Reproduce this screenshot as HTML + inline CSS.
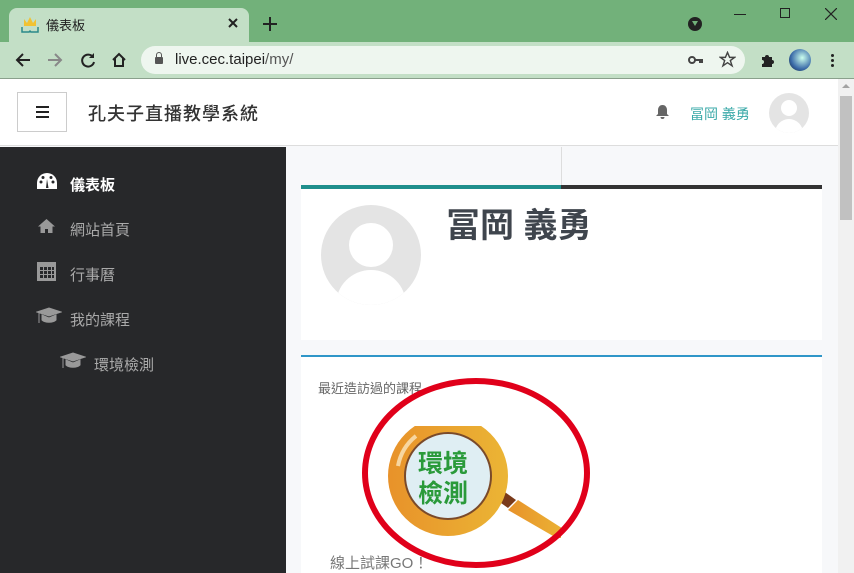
<!DOCTYPE html>
<html><head><meta charset="utf-8"><style>
*{margin:0;padding:0;box-sizing:border-box}
body{width:854px;height:573px;overflow:hidden;position:relative;font-family:"Liberation Sans","Noto Sans CJK TC",sans-serif;background:#f7f8fa}
.a{position:absolute}
</style></head><body>
<div class="a" style="left:0;top:0;width:854px;height:42px;background:#72b17a"></div>
<div class="a" style="left:9px;top:8px;width:240px;height:36px;background:#c3dfc6;border-radius:8px 8px 0 0"></div>
<div class="a" style="left:0;top:42px;width:854px;height:36px;background:#c3dfc6"></div>
<div class="a" style="left:0;top:78px;width:854px;height:1px;background:#8aa08c"></div>
<svg class="a" style="left:20px;top:15px" width="20" height="20" viewBox="0 0 20 20"><path d="M4 4l3 4 3-6 3 6 3-4v7H4z" fill="#f1c232"/><path d="M2 12v5h7l1-1 1 1h7v-5" stroke="#2a8a8a" stroke-width="1.5" fill="none"/></svg>
<div class="a" style="left:46px;top:15px;font-size:13px;color:#222">儀表板</div>
<svg class="a" style="left:228px;top:18px" width="10" height="10"><path d="M1 1l8 8M9 1l-8 8" stroke="#222" stroke-width="2"/></svg>
<svg class="a" style="left:263px;top:17px" width="14" height="14"><path d="M7 0v14M0 7h14" stroke="#222" stroke-width="2"/></svg>
<div class="a" style="left:688px;top:17px;width:14px;height:14px;border-radius:50%;background:#222"></div>
<div class="a" style="left:692px;top:21px;width:0;height:0;border-left:3px solid transparent;border-right:3px solid transparent;border-top:5px solid #72b17a"></div>
<div class="a" style="left:734px;top:14px;width:12px;height:1px;background:#222"></div>
<div class="a" style="left:780px;top:8px;width:10px;height:10px;border:1px solid #222"></div>
<svg class="a" style="left:825px;top:8px" width="12" height="12"><path d="M0 0l12 12M12 0L0 12" stroke="#222" stroke-width="1.2"/></svg>
<svg class="a" style="left:14px;top:51px" width="18" height="18"><path d="M16 9H3M9 3L3 9l6 6" stroke="#222" stroke-width="2" fill="none"/></svg>
<svg class="a" style="left:46px;top:51px" width="18" height="18"><path d="M2 9h13M9 3l6 6-6 6" stroke="#888" stroke-width="2" fill="none"/></svg>
<svg class="a" style="left:79px;top:51px" width="18" height="18"><path d="M14 6A6 6 0 1 0 15 11" stroke="#222" stroke-width="2" fill="none"/><path d="M15 2v5h-5z" fill="#222"/></svg>
<svg class="a" style="left:110px;top:51px" width="18" height="18" viewBox="0 0 18 18"><path d="M3 9L9 3l6 6M5 7v8h8V7" stroke="#222" stroke-width="2" fill="none"/></svg>
<div class="a" style="left:141px;top:46px;width:604px;height:28px;background:#eef6ef;border-radius:14px"></div>
<div class="a" style="left:155px;top:57px;width:8px;height:7px;background:#555;border-radius:1px"></div>
<div class="a" style="left:156px;top:52px;width:6px;height:7px;border:1.5px solid #555;border-radius:3px 3px 0 0"></div>
<div class="a" style="left:175px;top:51px;font-size:15px;color:#222">live.cec.taipei<span style="color:#555">/my/</span></div>
<svg class="a" style="left:688px;top:55px" width="16" height="10"><circle cx="4" cy="5" r="3" stroke="#444" stroke-width="2" fill="none"/><path d="M7 5h8M12 5v3M14 5v3" stroke="#444" stroke-width="2"/></svg>
<svg class="a" style="left:719px;top:51px" width="17" height="17" viewBox="0 0 24 24"><path d="M12 2l3 7h7l-6 4.5 2.5 7.5-6.5-4.5-6.5 4.5 2.5-7.5L2 9h7z" stroke="#444" stroke-width="2" fill="none"/></svg>
<svg class="a" style="left:760px;top:52px" width="16" height="16" viewBox="0 0 16 16"><path d="M2 5h3a2 2 0 014 0h3v3a2 2 0 010 4v3H2v-3a2 2 0 000-4z" fill="#222"/></svg>
<div class="a" style="left:789px;top:49px;width:22px;height:22px;border-radius:50%;background:radial-gradient(circle at 60% 40%,#cfe,#3a6aa8 60%,#123)"></div>
<div class="a" style="left:831px;top:54px;width:3px;height:3px;background:#222;border-radius:50%;box-shadow:0 5px #222,0 10px #222"></div>
<div class="a" style="left:0;top:79px;width:838px;height:67px;background:#fff;border-bottom:1px solid #ddd"></div>
<div class="a" style="left:17px;top:92px;width:50px;height:40px;border:1px solid #ccc;background:#fff"></div>
<div class="a" style="left:36px;top:106px;width:13px;height:2px;background:#222;box-shadow:0 5px #222,0 10px #222"></div>
<div class="a" style="left:88px;top:100px;font-size:18px;color:#333;letter-spacing:1px;font-weight:500">孔夫子直播教學系統</div>
<svg class="a" style="left:655px;top:104px" width="15" height="16" viewBox="0 0 15 16"><path d="M7.5 1c-3 0-4.5 2.5-4.5 5v4L1 12h13l-2-2V6c0-2.5-1.5-5-4.5-5zM5.5 13a2 2 0 004 0z" fill="#666"/></svg>
<div class="a" style="left:690px;top:104px;font-size:14px;color:#3aa9a8">冨岡 義勇</div>
<div class="a" style="left:769px;top:93px;width:40px;height:40px;border-radius:50%;background:#e4e4e4;overflow:hidden"><div class="a" style="left:12px;top:7px;width:16px;height:16px;border-radius:50%;background:#fff"></div><div class="a" style="left:6px;top:26px;width:28px;height:28px;border-radius:50%;background:#fff"></div></div>
<div class="a" style="left:838px;top:79px;width:16px;height:494px;background:#f1f1f1"></div>
<div class="a" style="left:840px;top:96px;width:12px;height:124px;background:#c1c1c1"></div>
<div class="a" style="left:842px;top:84px;width:0;height:0;border-left:4px solid transparent;border-right:4px solid transparent;border-bottom:4px solid #a3a3a3"></div>
<div class="a" style="left:0;top:147px;width:286px;height:426px;background:#27282a"></div>
<svg class="a" style="left:36px;top:172px" width="22" height="18" viewBox="0 0 22 18"><path d="M11 1A10 10 0 001 11v6h20v-6A10 10 0 0011 1z" fill="#fff"/><circle cx="5" cy="10" r="1.5" fill="#27282a"/><circle cx="7" cy="5.5" r="1.5" fill="#27282a"/><circle cx="15" cy="5.5" r="1.5" fill="#27282a"/><circle cx="17" cy="10" r="1.5" fill="#27282a"/><path d="M10 16l1-9 1.5 9z" fill="#27282a"/></svg>
<div class="a" style="left:70px;top:174px;font-size:15px;color:#fff;font-weight:bold">儀表板</div>
<svg class="a" style="left:37px;top:218px" width="19" height="16" viewBox="0 0 19 16"><path d="M9.5 1L1 8.5h2.5V15h4.5v-4h3v4h4.5V8.5H18z" fill="#999"/></svg>
<div class="a" style="left:70px;top:219px;font-size:15px;color:#aaa">網站首頁</div>
<div class="a" style="left:37px;top:262px;width:19px;height:19px;border:2px solid #999;border-top-width:5px;background:repeating-linear-gradient(90deg,#999 0 1px,transparent 1px 4px),repeating-linear-gradient(0deg,#999 0 1px,transparent 1px 4px)"></div>
<div class="a" style="left:70px;top:264px;font-size:15px;color:#aaa">行事曆</div>
<svg class="a" style="left:36px;top:306px" width="26" height="20" viewBox="0 0 26 20"><path d="M1 6l12-4 12 4-12 4z M6 9v5c3 3 11 3 14 0V9l-7 3z M3 7v10" fill="#999" stroke="#999" stroke-width="1"/></svg>
<div class="a" style="left:70px;top:309px;font-size:15px;color:#aaa">我的課程</div>
<svg class="a" style="left:60px;top:351px" width="26" height="20" viewBox="0 0 26 20"><path d="M1 6l12-4 12 4-12 4z M6 9v5c3 3 11 3 14 0V9l-7 3z M3 7v10" fill="#999" stroke="#999" stroke-width="1"/></svg>
<div class="a" style="left:94px;top:354px;font-size:15px;color:#aaa">環境檢測</div>
<div class="a" style="left:561px;top:147px;width:1px;height:38px;background:#ddd"></div>
<div class="a" style="left:301px;top:185px;width:521px;height:155px;background:#fff"></div>
<div class="a" style="left:301px;top:185px;width:260px;height:4px;background:#1f8f8c"></div>
<div class="a" style="left:561px;top:185px;width:261px;height:4px;background:#333"></div>
<div class="a" style="left:321px;top:205px;width:100px;height:100px;border-radius:50%;background:#e4e4e4;overflow:hidden"><div class="a" style="left:28px;top:18px;width:44px;height:44px;border-radius:50%;background:#fff"></div><div class="a" style="left:15px;top:65px;width:70px;height:70px;border-radius:50%;background:#fff"></div></div>
<div class="a" style="left:446px;top:198px;font-size:34px;color:#3f454d;font-weight:bold">冨岡 義勇</div>
<div class="a" style="left:301px;top:355px;width:521px;height:218px;background:#fff"></div>
<div class="a" style="left:301px;top:355px;width:521px;height:2px;background:#2f96c8"></div>
<div class="a" style="left:318px;top:378px;font-size:13px;color:#666">最近造訪過的課程</div>
<svg class="a" style="left:386px;top:426px" width="175" height="112" viewBox="0 0 175 112">
<defs><linearGradient id="g" x1="0" x2="1"><stop offset="0" stop-color="#e8922a"/><stop offset="1" stop-color="#ebb535"/></linearGradient></defs>
<path d="M122 84l10-10 50 32-8 8z" fill="url(#g)"/><path d="M108 72l8-8 14 10-8 8z" fill="#7a3a1a"/>
<circle cx="62" cy="50" r="60" fill="url(#g)"/>
<circle cx="62" cy="50" r="43" fill="#dfeef3" stroke="#7a4a2a" stroke-width="2"/>
<path d="M12 40a50 50 0 0 1 18-30" stroke="#f7d6a0" stroke-width="4" fill="none"/>
<text x="32" y="46" font-size="25" fill="#2a9a3a" font-family="Noto Sans CJK TC,sans-serif" font-weight="bold">環境</text>
<text x="32" y="76" font-size="25" fill="#2a9a3a" font-family="Noto Sans CJK TC,sans-serif" font-weight="bold">檢測</text>
</svg>
<svg class="a" style="left:0;top:0" width="854" height="573"><ellipse cx="476" cy="473" rx="111" ry="92" fill="none" stroke="#e0001a" stroke-width="6"/></svg>
<div class="a" style="left:330px;top:552px;font-size:15px;color:#777">線上試課GO！</div>
</body></html>
